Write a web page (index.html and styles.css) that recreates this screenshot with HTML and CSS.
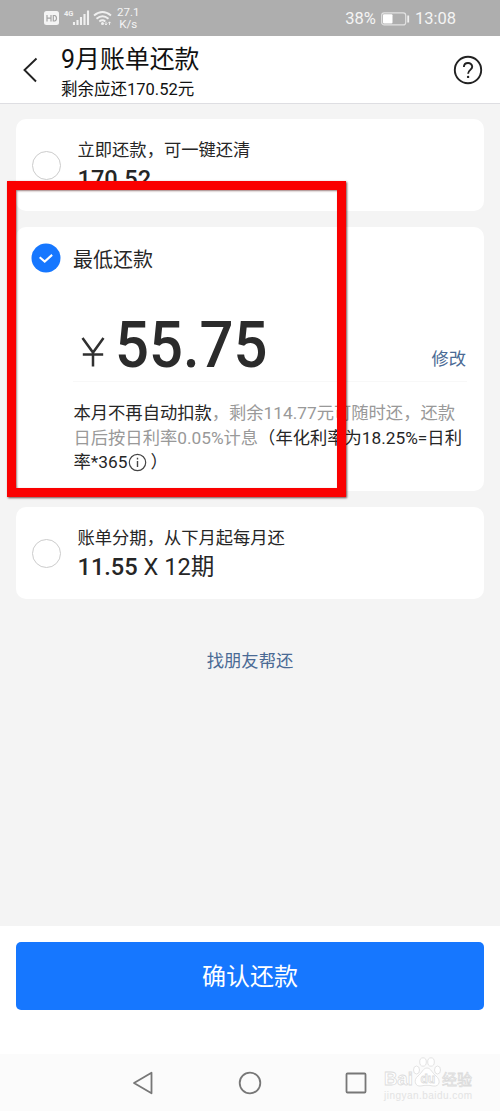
FILE: index.html
```html
<!DOCTYPE html>
<html lang="zh-CN">
<head>
<meta charset="utf-8">
<title>9月账单还款</title>
<link rel="stylesheet" href="styles.css">
</head>
<body>
<div class="screen">
  <div class="status">
    <svg class="signals" width="70" height="20" viewBox="0 0 70 20">
      <rect x="0" y="3" width="15" height="14" rx="2.500" fill="#f4f4f4"/>
      <path d="M3 7v6.500M3 10.200h4M7 7v6.500M9.300 7.500v5.500h1.200q2-.2 2-2.700t-2-2.800z" fill="none" stroke="#a5a5a5" stroke-width="1.200"/>
      <text x="20" y="7.500" class="gen">4G</text>
      <path d="M30 14v3M33.500 12v5M37 9v8M40.500 6v11M44 2.500v14.500" stroke="#f0f0f0" stroke-width="2.100" fill="none"/>
      <path d="M50 7.500q8.500-7 17 0M52.500 10.700q6-5 12 0M55.300 13.400q3.200-2.300 6 0" stroke="#f0f0f0" stroke-width="1.900" fill="none"/>
      <circle cx="58.500" cy="15.500" r="1.500" fill="#f0f0f0"/>
      <path d="M62 13.800v3M60.800 15.600l1.200 1.400 1.200-1.400M65.500 17v-3M64.300 15.200l1.200-1.400 1.200 1.400" stroke="#f0f0f0" stroke-width=".9" fill="none"/>
    </svg>
    <div class="speed"><span>27.1</span><span>K/s</span></div>
    <div class="power">
      <span>38%</span>
      <svg width="29" height="14" viewBox="0 0 29 14">
        <rect x=".7" y=".9" width="24" height="12" rx="2.500" fill="none" stroke="#e2e2e2" stroke-width="1.200"/>
        <rect x="2" y="2.200" width="9.500" height="9.400" rx="1" fill="#fff"/>
        <path d="M27.200 3.500v7" stroke="#efefef" stroke-width="1.800"/>
      </svg>
      <span class="clock">13:08</span>
    </div>
  </div>

  <div class="header">
    <svg class="back" width="16" height="26" viewBox="0 0 16 26"><path d="M14.500 1.500L2.500 13l11.500 11.500" fill="none" stroke="#222" stroke-width="1.900"/></svg>
    <div class="titles">
      <div class="title">9月账单还款</div>
      <div class="subtitle">剩余应还170.52元</div>
    </div>
    <svg class="help" width="30" height="30" viewBox="0 0 30 30">
      <circle cx="15" cy="15" r="13.200" fill="none" stroke="#222" stroke-width="1.900"/>
      <path d="M10.900 12.100c0-5.600 8.300-5.400 8.300-.3 0 3.100-4.100 3.100-4.100 6.900" fill="none" stroke="#222" stroke-width="1.900"/>
      <circle cx="15.100" cy="21.900" r="1.200" fill="#222"/>
    </svg>
  </div>

  <div class="content">
    <div class="card option">
      <span class="radio"></span>
      <div class="option-text">
        <div class="label">立即还款，可一键还清</div>
        <div class="value"><b>170.52</b></div>
      </div>
    </div>

    <div class="card minimum">
      <div class="minimum-head">
        <svg width="30" height="30" viewBox="0 0 30 30"><circle cx="15" cy="15" r="14.500" fill="#1677ff"/><path d="M8.700 14.300l5 4.300 7.400-6.700" fill="none" stroke="#fff" stroke-width="2.100"/></svg>
        <span>最低还款</span>
      </div>
      <div class="amount-row">
        <svg class="yen" width="24" height="30" viewBox="0 0 24 30"><path d="M1.500 1L12 15.500 22.500 1M12 15v14.500M1.800 17.500h20.400" fill="none" stroke="#303030" stroke-width="2.500"/></svg>
        <span class="amount">55.75</span>
        <span class="edit">修改</span>
      </div>
      <div class="note">
        <div><span class="dark">本月不再自动扣款</span>，剩余114.77元可随时还，还款</div>
        <div>日后按日利率0.05%计息<span class="dark">（年化利率为18.25%=日利</span></div>
        <div class="dark">率*365<svg class="info" width="19" height="19" viewBox="0 0 19 19"><circle cx="9.500" cy="9.500" r="8.200" fill="none" stroke="#444" stroke-width="1.200"/><path d="M9.500 8v6M9.500 4.800v1.700" stroke="#444" stroke-width="1.400"/></svg><span class="close">）</span></div>
      </div>
    </div>

    <div class="card option">
      <span class="radio"></span>
      <div class="option-text">
        <div class="label">账单分期，从下月起每月还</div>
        <div class="value"><b>11.55</b> X 12期</div>
      </div>
    </div>
    <div class="friend">找朋友帮还</div>
  </div>

  <div class="footer"><div class="confirm">确认还款</div></div>

  <div class="nav">
    <svg width="22" height="24" viewBox="0 0 22 24"><path d="M19.500 1.700v20.600L2 12z" fill="none" stroke="#777" stroke-width="1.800" stroke-linejoin="round"/></svg>
    <svg width="24" height="24" viewBox="0 0 24 24"><circle cx="12" cy="12" r="10.300" fill="none" stroke="#777" stroke-width="1.800"/></svg>
    <svg width="22" height="24" viewBox="0 0 22 24"><rect x="1.500" y="2.500" width="19" height="19" rx="1" fill="none" stroke="#777" stroke-width="1.800"/></svg>
  </div>

  <div class="highlight"></div>
  <svg class="watermark" width="96" height="50" viewBox="0 0 96 50">
    <g fill="#fff" stroke="#dcdcdc" stroke-width=".8">
      <text x="1" y="28.500" class="wm-bai">Bai</text>
      <ellipse cx="33.500" cy="14" rx="3" ry="4"/>
      <ellipse cx="40" cy="6" rx="3.300" ry="4.200"/>
      <ellipse cx="48" cy="6" rx="3.300" ry="4.200"/>
      <ellipse cx="54.500" cy="14" rx="3" ry="4"/>
      <path d="M44 12c-4 0-5 5-9 8-5 4-3 11 3 10 4-1 8-1 12 0 7 1 8-6 3-10-4-3-5-8-9-8z"/>
      <text x="37.500" y="27" class="wm-du">du</text>
      <text x="59" y="28.500" class="wm-cn">经验</text>
    </g>
    <text x="1" y="42.500" class="wm-url" textLength="88">jingyan.baidu.com</text>
  </svg>
</div>
</body>
</html>
```
FILE: styles.css
```css
body {
  margin: 0;
  font-family: Roboto, "Noto Sans CJK SC", sans-serif;
  color: #262626;
}
.screen {
  position: relative;
  display: flex;
  flex-direction: column;
  width: 500px;
  height: 1111px;
  overflow: hidden;
  background: #f4f4f4;
  white-space: nowrap;
}
svg { display: block; flex: none; }

.status {
  display: flex;
  align-items: center;
  box-sizing: border-box;
  height: 36px;
  padding: 0 44px;
  background: #aeaeae;
  color: #f4f4f4;
}
.gen { font: bold 7.5px Roboto, sans-serif; fill: #f0f0f0; }
.speed {
  display: flex;
  flex-direction: column;
  align-items: center;
  margin-left: 3px;
  font-size: 11.5px;
  line-height: 12.5px;
}
.power {
  display: flex;
  align-items: center;
  gap: 5px;
  margin-left: auto;
  font-size: 16.5px;
  line-height: 20px;
  padding-top: 2px;
}

.header {
  display: flex;
  align-items: center;
  box-sizing: border-box;
  height: 68px;
  padding: 0 17px 0 22px;
  background: #fff;
  border-bottom: 1px solid #dedee2;
}
.titles { margin-left: 23px; color: #111; }
.title { font-size: 24.9px; line-height: 32px; padding-top: 8px; }
.subtitle { font-size: 16.5px; line-height: 28px; }
.help { margin-left: auto; }

.content { flex: 1; padding: 15px 16px 0; }
.card {
  box-sizing: border-box;
  margin-bottom: 16px;
  background: #fff;
  border-radius: 10px;
}
.option {
  display: flex;
  align-items: center;
  height: 92px;
  padding-left: 16px;
}
.radio {
  box-sizing: border-box;
  width: 29px;
  height: 29px;
  border: 1.5px solid #ccc;
  border-radius: 50%;
}
.option-text { margin-left: 16.5px; padding-top: 2px; }
.label { font-size: 17.3px; line-height: 26px; }
.value { font-size: 23.6px; line-height: 32px; }
.value b { font-weight: 500; }

.minimum { height: 264px; padding: 16px 17px 0 15px; }
.minimum-head {
  display: flex;
  align-items: center;
  gap: 12px;
  height: 30px;
  font-size: 20px;
}
.amount-row {
  display: flex;
  align-items: flex-end;
  box-sizing: border-box;
  height: 109px;
  margin-left: 42px;
  padding: 0 1px 13px 7px;
  border-bottom: 1px solid #f8f8f8;
}
.yen { margin: 0 0 1px 1px; }
.amount {
  margin: 0 0 -9px 10px;
  font-size: 65px;
  font-weight: 500;
  line-height: 64px;
  color: #2b2b2b;
  transform: scaleX(0.92);
  transform-origin: left;
}
.edit {
  margin: 0 0 -4px auto;
  color: #4a6a94;
  font-size: 17.3px;
  line-height: 26px;
}
.note {
  margin: 19px 0 0 42.5px;
  color: #999;
  font-size: 17.3px;
  line-height: 24.5px;
}
.dark { color: #262626; }
.info { display: inline-block; margin-left: 1px; vertical-align: -4px; }
.close { margin-left: 3px; }

.friend {
  margin-top: 49px;
  color: #4a6a94;
  font-size: 17.3px;
  line-height: 26px;
  text-align: center;
}
.footer {
  box-sizing: border-box;
  height: 128px;
  padding: 16px;
  background: #fff;
}
.confirm {
  height: 68px;
  border-radius: 5px;
  background: #1677ff;
  color: #fff;
  font-size: 24px;
  line-height: 71px;
  text-align: center;
}
.nav {
  display: flex;
  align-items: center;
  justify-content: space-between;
  height: 57px;
  padding: 0 133px 0 132px;
  background: #fbfbfb;
}

.highlight {
  position: absolute;
  left: 7px;
  top: 181px;
  box-sizing: border-box;
  width: 339px;
  height: 316px;
  border: 9px solid #fa0000;
  box-shadow: 1px 1px 2px rgba(60, 0, 0, 0.7), inset 1px 1px 2px rgba(60, 0, 0, 0.5);
}
.watermark { position: absolute; left: 383px; top: 1056px; }
.wm-bai { font: bold 18.5px "Liberation Sans", sans-serif; }
.wm-du { font: bold 12px "Liberation Sans", sans-serif; }
.wm-cn { font: 15px "Noto Sans CJK SC", sans-serif; }
.wm-url { font: 10px "Liberation Sans", sans-serif; fill: #e3e3e3; }
```
